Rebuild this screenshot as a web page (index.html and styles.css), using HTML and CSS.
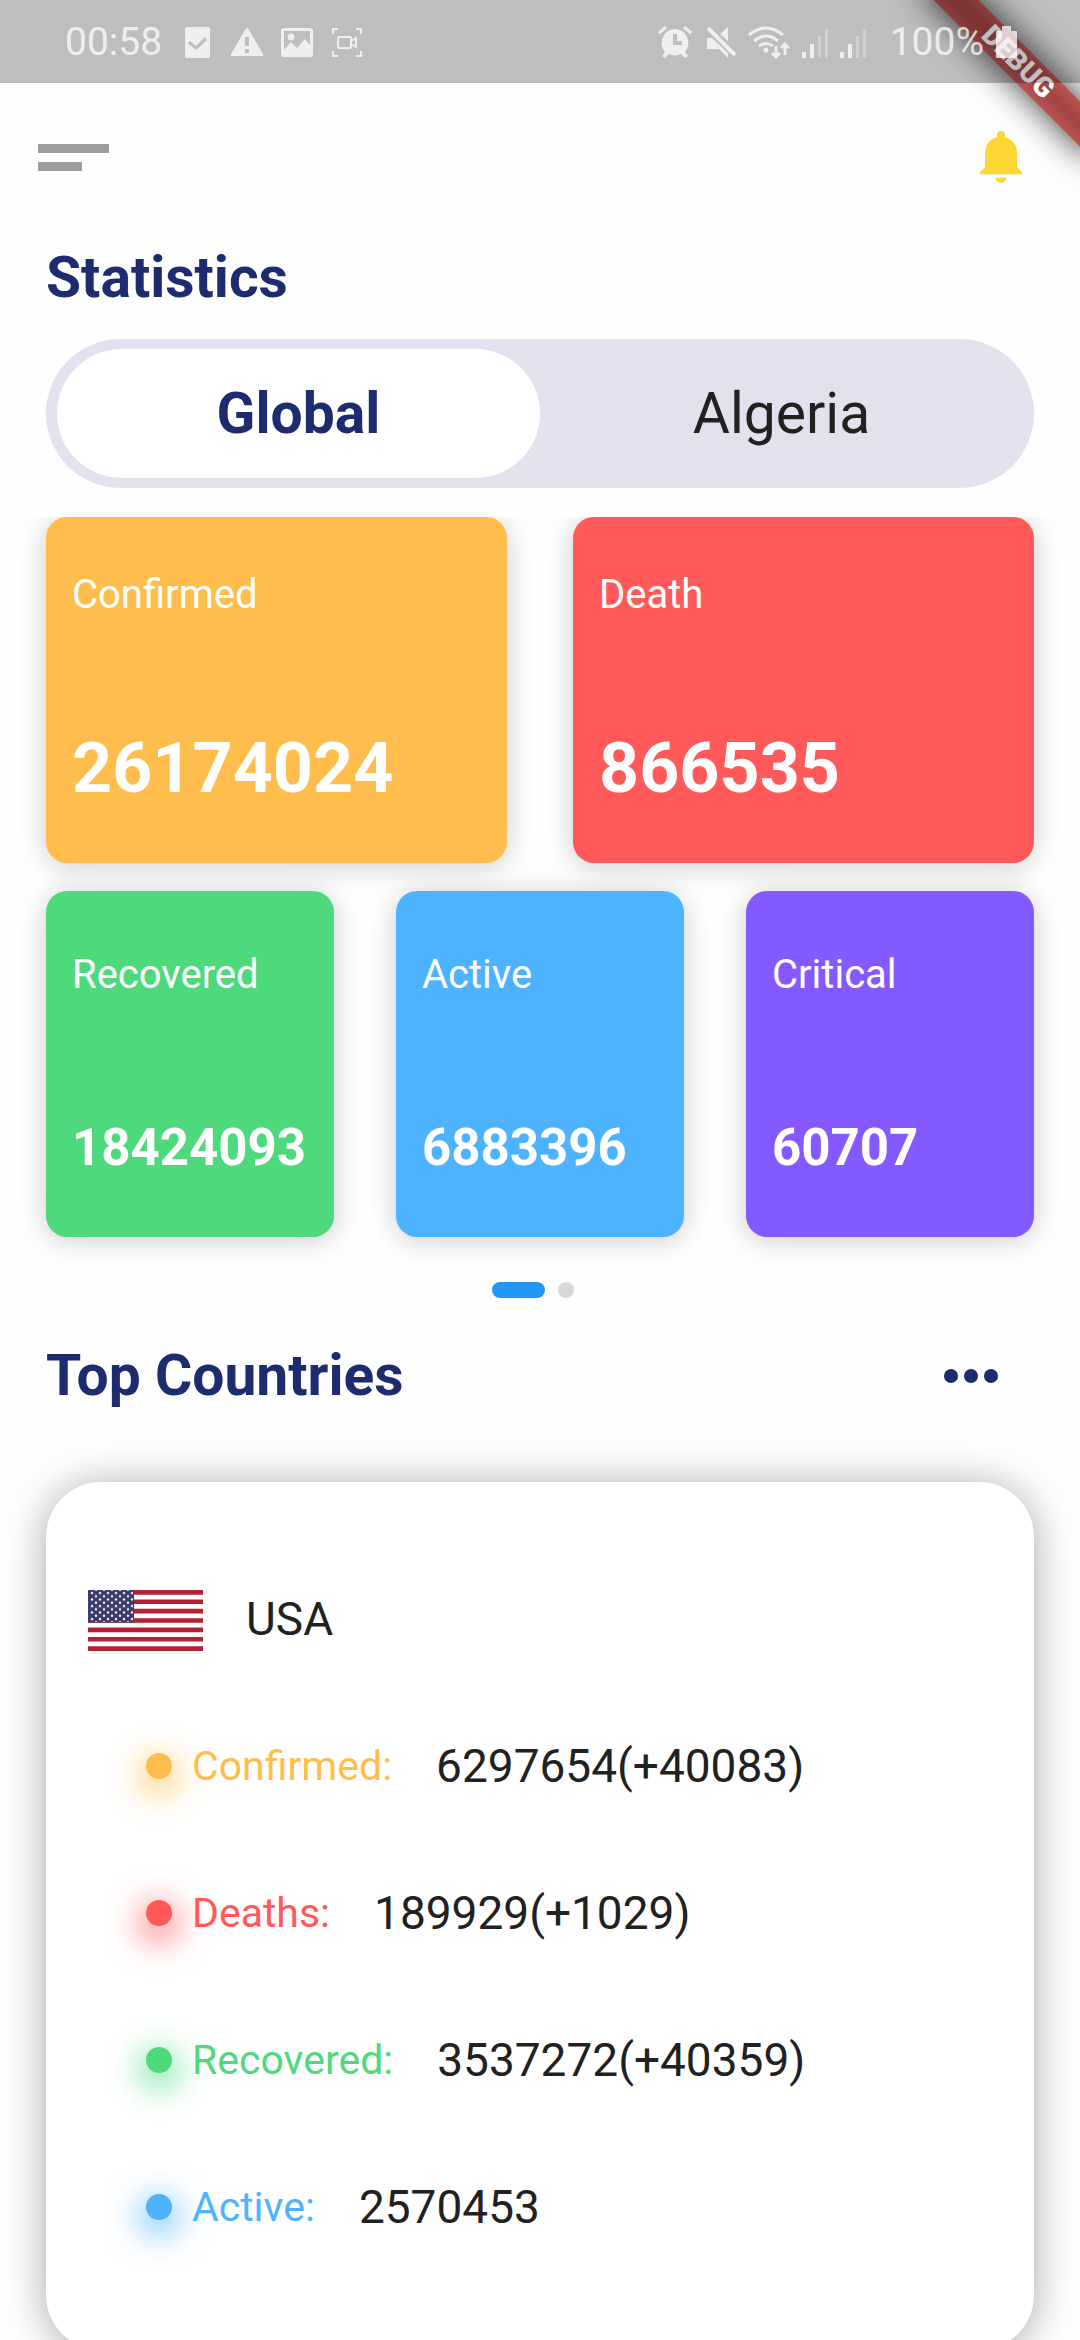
FILE: index.html
```html
<!DOCTYPE html>
<html lang="en">
<head>
<meta charset="utf-8">
<meta name="viewport" content="width=device-width, initial-scale=1">
<title>Statistics</title>
<link rel="stylesheet" href="styles.css">
</head>
<body>
<div class="app">
  <div class="ribbon" aria-hidden="true">DEBUG</div>

  <div class="status">
    <div class="status-group status-left">
      <span class="status-text clock">00:58</span>
      <svg width="34" height="34" viewBox="0 0 34 34"><path fill="currentColor" fill-rule="evenodd" d="M7 2h21a2 2 0 0 1 2 2v27a2 2 0 0 1-2 2H7a2 2 0 0 1-2-2V4a2 2 0 0 1 2-2zM10 16l-2 2 8 7 11-10-2-3-9 9z"/></svg>
      <svg width="34" height="34" viewBox="0 0 34 34"><path fill="currentColor" fill-rule="evenodd" d="M17 3q1 0 2 2l14 24q1 2-1 2H2q-2 0-1-2L15 5q1-2 2-2zM15 12v9h4v-9zM15 24v4h4v-4z"/></svg>
      <svg width="34" height="34" viewBox="0 0 34 34"><path fill="currentColor" fill-rule="evenodd" d="M4 3h26a3 3 0 0 1 3 3v23a3 3 0 0 1-3 3H4a3 3 0 0 1-3-3V6a3 3 0 0 1 3-3zM4 6v19l7-8 6 6 8-9 5 6V6z"/><circle cx="11" cy="12" r="3.500" fill="currentColor"/></svg>
      <svg width="34" height="34" viewBox="0 0 34 34" fill="none" stroke="currentColor" stroke-width="2"><path d="M3 9V4h5M26 4h5v5M31 26v5h-5M8 31H3v-5"/><rect x="8" y="12" width="13" height="11" rx="1"/><path d="M21 16l5-3v9l-5-3"/></svg>
    </div>
    <div class="status-group">
      <svg width="34" height="34" viewBox="0 0 34 34"><path fill="currentColor" fill-rule="evenodd" d="M17 4a14 14 0 0 1 10 23l3 4-3 2-4-4a14 14 0 0 1-12 0l-4 4-3-2 3-4A14 14 0 0 1 17 4zM15 9v11h9v-4h-5V9z"/><path stroke="currentColor" stroke-width="3" d="M1 8l7-6M33 8l-7-6"/></svg>
      <svg width="32" height="34" viewBox="0 0 32 34"><path fill="currentColor" d="M3 13h5l16 15v5l-9-9H3zM24 2v14l-8-7z"/><path stroke="currentColor" stroke-width="4" d="M4 3l27 27"/></svg>
      <svg width="42" height="34" viewBox="0 0 42 34"><g fill="none" stroke="currentColor" stroke-width="3"><path d="M1 10q17-14 34 0M6 16q12-10 24 0M11 21q7-5 14 0"/></g><circle cx="18" cy="25" r="2.500" fill="currentColor"/><path fill="none" stroke="currentColor" stroke-width="3" d="M28 21v10M24 28l4 4 4-4M37 30V20M33 23l4-4 4 4"/></svg>
      <svg width="26" height="34" viewBox="0 0 26 34"><path fill="currentColor" d="M0 27h4v6H0zM8 19h4v14H8z"/><path fill="currentColor" opacity=".4" d="M16 11h3v22h-3zM23 4h3v29h-3z"/></svg>
      <svg width="26" height="34" viewBox="0 0 26 34"><path fill="currentColor" d="M0 27h4v6H0zM8 19h4v14H8z"/><path fill="currentColor" opacity=".4" d="M16 11h3v22h-3zM23 4h3v29h-3z"/></svg>
      <span class="status-text battery-level">100%</span>
      <svg width="21" height="34" viewBox="0 0 21 34"><path fill="currentColor" d="M6 1h9v5h5q1 0 1 1v25q0 1-1 1H1q-1 0-1-1V7q0-1 1-1h5z"/></svg>
    </div>
  </div>

  <header class="appbar">
    <button class="icon-button" type="button" aria-label="Menu">
      <svg width="71" height="27" viewBox="0 0 71 27"><path fill="#9e9e9e" d="M0 0h71v9H0zM0 18h44v9H0z"/></svg>
    </button>
    <button class="icon-button" type="button" aria-label="Notifications">
      <svg width="42" height="52" viewBox="0 0 126 156"><path fill="#fdd835" d="M51 12a12 12 0 0 1 24 0v7c21 5 36 22 36 47v42l15 15v7H0v-7l15-15V66c0-25 15-42 36-47zM47 140h32c0 8-7 15-16 15s-16-7-16-15z"/></svg>
    </button>
  </header>

  <main class="content">
    <h1 class="title">Statistics</h1>
    <div class="toggle" role="tablist">
      <button class="tab tab-active" type="button" role="tab" aria-selected="true">Global</button>
      <button class="tab" type="button" role="tab" aria-selected="false">Algeria</button>
    </div>

    <section class="stats">
      <div class="row row-two">
        <article class="stat orange"><span class="label">Confirmed</span><strong class="number number-large">26174024</strong></article>
        <article class="stat red"><span class="label">Death</span><strong class="number number-large">866535</strong></article>
      </div>
      <div class="row row-three">
        <article class="stat green"><span class="label">Recovered</span><strong class="number">18424093</strong></article>
        <article class="stat blue"><span class="label">Active</span><strong class="number">6883396</strong></article>
        <article class="stat purple"><span class="label">Critical</span><strong class="number">60707</strong></article>
      </div>
    </section>

    <div class="pager">
      <span class="page page-active"></span>
      <span class="page"></span>
    </div>

    <div class="section-head">
      <h2 class="title">Top Countries</h2>
      <button class="icon-button more" type="button" aria-label="More countries">
        <svg width="54" height="14" viewBox="0 0 54 14" fill="#1c2c6e"><circle cx="7" cy="7" r="7"/><circle cx="27" cy="7" r="7"/><circle cx="47" cy="7" r="7"/></svg>
      </button>
    </div>

    <article class="country">
      <div class="country-head">
        <svg width="115" height="61" viewBox="0 0 115 61" role="img" aria-label="Flag of the USA">
          <defs>
            <pattern id="stars" width="8" height="6.500" patternUnits="userSpaceOnUse"><circle cx="4" cy="3" r="1.200" fill="#fff"/><circle cx="0" cy="6.250" r="1.200" fill="#fff"/><circle cx="8" cy="6.250" r="1.200" fill="#fff"/><circle cx="0" cy="-.25" r="1.200" fill="#fff"/><circle cx="8" cy="-.25" r="1.200" fill="#fff"/></pattern>
          </defs>
          <path fill="#fff" d="M0 0h115v61H0z"/>
          <path stroke="#b22234" stroke-width="4.700" d="M0 2.350h115M0 11.730h115M0 21.110h115M0 30.500h115M0 39.880h115M0 49.260h115M0 58.650h115"/>
          <path fill="#3c3b6e" d="M0 0h46v32.500H0z"/>
          <path fill="url(#stars)" d="M1 0h44v32H1z"/>
        </svg>
        <h3 class="country-name">USA</h3>
      </div>
      <ul class="figures">
        <li class="figure f-orange"><span class="dot"></span><span class="figure-label">Confirmed:</span><span class="figure-value">6297654(+40083)</span></li>
        <li class="figure f-red"><span class="dot"></span><span class="figure-label">Deaths:</span><span class="figure-value">189929(+1029)</span></li>
        <li class="figure f-green"><span class="dot"></span><span class="figure-label">Recovered:</span><span class="figure-value">3537272(+40359)</span></li>
        <li class="figure f-blue"><span class="dot"></span><span class="figure-label">Active:</span><span class="figure-value">2570453</span></li>
      </ul>
    </article>
  </main>
</div>
</body>
</html>
```

FILE: styles.css
```css
* {
  box-sizing: border-box;
}

body {
  margin: 0;
  background: #fefefe;
  color: #212121;
  font-family: Roboto, "Liberation Sans", sans-serif;
}

h1,
h2,
h3,
ul {
  margin: 0;
  padding: 0;
}

button {
  border: 0;
  padding: 0;
  background: none;
  color: inherit;
  font: inherit;
}

svg {
  display: block;
  flex: none;
}

.app {
  position: relative;
  display: flex;
  flex-direction: column;
  height: 100vh;
  overflow: hidden;
}

/* Corner banner of a development build; the status bar lies over it. */
.ribbon {
  position: absolute;
  top: 46px;
  right: -58px;
  width: 240px;
  height: 32px;
  transform: rotate(45deg);
  background: linear-gradient(#b95454, #a64545 40%, #a64545 60%, #b95454);
  box-shadow: 0 0 34px rgba(0, 0, 0, 0.8);
  color: #fff;
  font-size: 28px;
  font-weight: 900;
  line-height: 32px;
  text-align: center;
}

.status {
  position: relative;
  display: flex;
  justify-content: space-between;
  align-items: center;
  flex: none;
  height: 83px;
  padding: 0 63px 0 65px;
  background: rgba(0, 0, 0, 0.25);
  color: rgba(255, 255, 255, 0.75);
}

.status-group {
  display: flex;
  align-items: center;
  gap: 12px;
}

.status-left {
  gap: 16px;
}

.status-text {
  font-size: 39px;
  line-height: 48px;
}

.clock {
  margin-right: 2px;
}

.battery-level {
  margin-left: 12px;
}

.appbar {
  display: flex;
  justify-content: space-between;
  align-items: center;
  flex: none;
  padding: 48px 58px 32px 38px;
}

.content {
  flex: 1;
  min-height: 0;
  padding: 29px 46px;
  overflow-y: auto;
  scrollbar-width: none;
}

.title {
  color: #1c2c6e;
  font-size: 57px;
  font-weight: 700;
  line-height: 68px;
}

.toggle {
  display: flex;
  margin-top: 27px;
  padding: 10px 11px;
  border-radius: 75px;
  background: #e2e2ee;
}

.tab {
  flex: 1;
  height: 129px;
  border-radius: 65px;
  color: #212121;
  font-size: 57px;
  line-height: 68px;
}

.tab-active {
  background: #fff;
  color: #1c2c6e;
  font-weight: 700;
}

/* The cards' shadow is cut off at the top edge of the pager. */
.stats {
  display: grid;
  gap: 28px;
  margin: 29px -46px 0;
  padding: 0 46px 45px;
  overflow: hidden;
}

.row {
  display: grid;
}

.row-two {
  grid-template-columns: repeat(2, 1fr);
  gap: 66px;
}

.row-three {
  grid-template-columns: repeat(3, 1fr);
  gap: 62px;
}

.stat {
  display: flex;
  flex-direction: column;
  justify-content: space-around;
  height: 346px;
  padding: 0 26px;
  border-radius: 21px;
  box-shadow: 0 3px 28px rgba(0, 0, 0, 0.2);
  color: #fff;
}

.orange { background: #ffbd4d; }
.red { background: #ff5959; }
.green { background: #4dd97c; }
.blue { background: #4db3ff; }
.purple { background: #8459ff; }

.label {
  font-size: 40px;
  line-height: 48px;
}

.number {
  font-size: 51px;
  line-height: 60px;
}

.number-large {
  font-size: 70px;
  line-height: 84px;
}

.pager {
  display: flex;
  justify-content: center;
  gap: 13px;
  padding-right: 14px;
}

.page {
  width: 16px;
  height: 16px;
  border-radius: 8px;
  background: #d8d8d8;
}

.page-active {
  width: 53px;
  background: #2196f3;
}

.section-head {
  display: flex;
  justify-content: space-between;
  align-items: center;
  margin-top: 44px;
}

.more {
  margin-right: 36px;
}

.country {
  margin-top: 72px;
  padding: 108px 42px 116px;
  border-radius: 55px;
  background: #fff;
  box-shadow: 0 3px 42px rgba(0, 0, 0, 0.34);
}

.country-head {
  display: flex;
  align-items: flex-start;
  gap: 43px;
}

.country-name {
  font-size: 46px;
  font-weight: 400;
  line-height: 58px;
}

.figures {
  display: grid;
  gap: 93px;
  margin-top: 88px;
  padding-left: 58px;
  list-style: none;
}

.figure {
  display: flex;
  align-items: center;
}

.dot {
  width: 26px;
  height: 26px;
  margin-right: 20px;
  border-radius: 50%;
  background: currentColor;
  box-shadow: 0 9px 32px 7px color-mix(in srgb, currentColor 70%, transparent);
}

.figure-label {
  font-size: 41px;
  line-height: 48px;
}

.figure-value {
  margin-left: 44px;
  color: #212121;
  font-size: 46px;
  line-height: 54px;
}

.f-orange { color: #ffbd4d; }
.f-red { color: #ff5959; }
.f-green { color: #4dd97c; }
.f-blue { color: #4db3ff; }
```
